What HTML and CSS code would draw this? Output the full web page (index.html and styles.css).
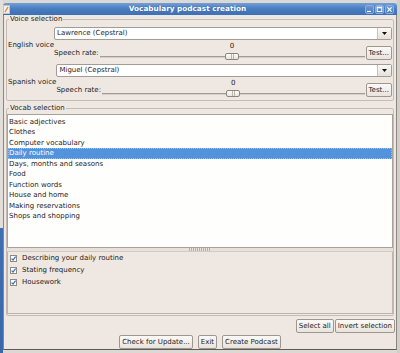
FILE: index.html
```html
<!DOCTYPE html>
<html lang="en">
<head>
    <meta charset="UTF-8">
    <title>Vocabulary podcast creation</title>
    <link rel="stylesheet" href="styles.css">
</head>
<body>
    <div class="screen">
        <div class="edgeLeft"></div>
        <div class="window">
            <div class="titleBar">
                <svg class="appIcon" width="7" height="9" viewBox="0 0 7 9">
                    <rect x="0.5" y="0.5" width="6" height="8" fill="#f4f0ea" stroke="#c9c2b8"/>
                    <path d="M2 7 L5 2" stroke="#e08a2c" stroke-width="1.4"/>
                </svg>
                <div class="title">Vocabulary podcast creation</div>
                <div class="winButtons">
                    <span class="winButton">
                        <svg width="9" height="9" viewBox="0 0 9 9"><path d="M2 6.5 H6" stroke="#fff" stroke-width="1.2"/></svg>
                    </span>
                    <span class="winButton">
                        <svg width="9" height="9" viewBox="0 0 9 9"><rect x="2.2" y="2.2" width="4.6" height="4.4" fill="none" stroke="#fff" stroke-width="1"/><path d="M2.2 2.6 H6.8" stroke="#fff" stroke-width="1.4"/></svg>
                    </span>
                    <span class="winButton">
                        <svg width="9" height="9" viewBox="0 0 9 9"><path d="M2.4 2.4 L6.6 6.6 M6.6 2.4 L2.4 6.6" stroke="#fff" stroke-width="1.3"/></svg>
                    </span>
                </div>
            </div>

            <div class="content">
                <fieldset class="voiceGroup">
                    <legend>Voice selection</legend>

                    <div class="voice">
                        <div class="voiceName">English voice</div>
                        <div class="voiceControls">
                            <div class="combo">
                                <span class="comboText">Lawrence (Cepstral)</span>
                                <span class="comboButton"><svg width="5" height="3" viewBox="0 0 5 3"><polygon points="0,0 5,0 2.5,3" fill="#111"/></svg></span>
                            </div>
                            <div class="rate">
                                <span class="rateLabel">Speech rate:</span>
                                <div class="slider">
                                    <div class="sliderValue">0</div>
                                    <div class="track"><div class="thumb"></div></div>
                                </div>
                                <button class="btn testButton">Test...</button>
                            </div>
                        </div>
                    </div>

                    <div class="voice">
                        <div class="voiceName">Spanish voice</div>
                        <div class="voiceControls">
                            <div class="combo">
                                <span class="comboText">Miguel (Cepstral)</span>
                                <span class="comboButton"><svg width="5" height="3" viewBox="0 0 5 3"><polygon points="0,0 5,0 2.5,3" fill="#111"/></svg></span>
                            </div>
                            <div class="rate">
                                <span class="rateLabel">Speech rate:</span>
                                <div class="slider">
                                    <div class="sliderValue">0</div>
                                    <div class="track"><div class="thumb"></div></div>
                                </div>
                                <button class="btn testButton">Test...</button>
                            </div>
                        </div>
                    </div>
                </fieldset>

                <fieldset class="vocabGroup">
                    <legend>Vocab selection</legend>
                    <ul class="topicList">
                        <li>Basic adjectives</li>
                        <li>Clothes</li>
                        <li>Computer vocabulary</li>
                        <li class="selected">Daily routine</li>
                        <li>Days, months and seasons</li>
                        <li>Food</li>
                        <li>Function words</li>
                        <li>House and home</li>
                        <li>Making reservations</li>
                        <li>Shops and shopping</li>
                    </ul>
                    <div class="splitter"><span class="grip"></span></div>
                    <div class="lessonList">
                        <div class="lesson">
                            <svg class="check" width="7" height="7" viewBox="0 0 7 7"><rect x="0.5" y="0.5" width="6" height="6" fill="#fff" stroke="#8f8983"/><path d="M1.6 3.6 L3 5 L5.6 1.6" fill="none" stroke="#3a6fc0" stroke-width="1.2"/></svg>
                            <span>Describing your daily routine</span>
                        </div>
                        <div class="lesson">
                            <svg class="check" width="7" height="7" viewBox="0 0 7 7"><rect x="0.5" y="0.5" width="6" height="6" fill="#fff" stroke="#8f8983"/><path d="M1.6 3.6 L3 5 L5.6 1.6" fill="none" stroke="#3a6fc0" stroke-width="1.2"/></svg>
                            <span>Stating frequency</span>
                        </div>
                        <div class="lesson">
                            <svg class="check" width="7" height="7" viewBox="0 0 7 7"><rect x="0.5" y="0.5" width="6" height="6" fill="#fff" stroke="#8f8983"/><path d="M1.6 3.6 L3 5 L5.6 1.6" fill="none" stroke="#3a6fc0" stroke-width="1.2"/></svg>
                            <span>Housework</span>
                        </div>
                    </div>
                </fieldset>

                <div class="selectionButtons">
                    <button class="btn">Select all</button>
                    <button class="btn">Invert selection</button>
                </div>

                <div class="mainButtons">
                    <button class="btn">Check for Update...</button>
                    <button class="btn">Exit</button>
                    <button class="btn">Create Podcast</button>
                </div>
            </div>
        </div>
        <div class="edgeRight"></div>
    </div>
</body>
</html>
```

FILE: styles.css
```css
* {
    margin: 0;
    padding: 0;
    box-sizing: border-box;
}
body {
    width: 400px;
    height: 353px;
    overflow: hidden;
    background-color: #dcd8d3;
    font-family: "DejaVu Sans", sans-serif;
    font-size: 7px;
    color: #1e1c1a;
}
.screen {
    display: flex;
    height: 353px;
}
.edgeLeft {
    width: 3px;
    background: linear-gradient(#e2deda 0, #e2deda 228px, #3f6fb2 228px, #3a68a8 100%);
}
.edgeRight {
    width: 3px;
    background-color: #d2cec9;
}
.window {
    width: 394px;
    margin-top: 3px;
    display: flex;
    flex-direction: column;
}
.titleBar {
    height: 12px;
    display: flex;
    align-items: center;
    padding: 0 3px 0 0;
    background: linear-gradient(#729fd6, #4a7ec2 45%, #3c6fb3);
    border-radius: 3px 3px 0 0;
    color: #fff;
}
.appIcon {
    display: block;
    margin-left: 0;
}
.title {
    flex: 1;
    text-align: center;
    font-weight: bold;
    font-size: 7.3px;
    line-height: 12px;
    text-shadow: 0 0 1px #2c5590;
}
.winButtons {
    display: flex;
    gap: 1px;
}
.winButton {
    width: 9px;
    height: 9px;
    display: block;
    border: 1px solid #8cb0de;
    border-radius: 2px;
    background: linear-gradient(#6e9bd4, #4a7cc0);
}
.winButton svg {
    display: block;
    margin: -1px;
}
.content {
    height: 335px;
    display: flex;
    flex-direction: column;
    background-color: #efe7e1;
    border-left: 1px solid #8c8680;
    border-right: 1px solid #8c8680;
    border-bottom: 1px solid #5f5a55;
}
fieldset {
    margin: 0 2px;
    border: 1px solid #c4bcb4;
    border-radius: 2px;
    min-width: 0;
}
legend {
    padding: 0 1px;
    line-height: 8px;
}
.voiceGroup {
    padding: 4px 1px 3px;
}
.voiceGroup legend {
    margin-left: 1px;
}
.voice {
    display: flex;
    align-items: center;
}
.voice + .voice {
    margin-top: 4px;
}
.voiceName {
    white-space: nowrap;
    padding-top: 3px;
}
.voiceControls {
    flex: 1;
    display: flex;
    flex-direction: column;
}
.combo {
    height: 13px;
    display: flex;
    background-color: #fff;
    border: 1px solid #a39c95;
    border-radius: 2px;
}
.comboText {
    flex: 1;
    padding-left: 2px;
    line-height: 11px;
}
.comboButton {
    width: 14px;
    display: flex;
    align-items: center;
    justify-content: center;
    border-left: 1px solid #c9c2bb;
    background: linear-gradient(#fbf9f7, #e6e0da);
}
.rate {
    height: 18px;
    margin-top: 2px;
    display: flex;
    align-items: flex-start;
}
.rateLabel {
    margin-top: 7px;
    line-height: 8px;
    white-space: nowrap;
}
.slider {
    flex: 1;
    margin-left: 1px;
    display: flex;
    flex-direction: column;
}
.sliderValue {
    line-height: 8px;
    text-align: center;
}
.track {
    height: 10px;
    padding-top: 3px;
    display: flex;
    justify-content: center;
    background: linear-gradient(transparent 0, transparent 6px, #a39b93 6px, #a39b93 7px, #d6cfc8 7px, #d6cfc8 8px, transparent 8px);
}
.thumb {
    width: 14px;
    height: 7px;
    border: 1px solid #8d8680;
    border-radius: 2px;
    background:
        linear-gradient(90deg, transparent 5px, #bdb6af 5px, #bdb6af 6px, transparent 6px, transparent 7px, #bdb6af 7px, #bdb6af 8px, transparent 8px),
        linear-gradient(#fdfcfb, #e9e4df);
}
.btn {
    height: 14px;
    padding: 0 2px;
    font-family: "DejaVu Sans", sans-serif;
    font-size: 7px;
    line-height: 12px;
    color: #1e1c1a;
    white-space: nowrap;
    border: 1px solid #9e978f;
    border-radius: 2px;
    background: linear-gradient(#fbf9f7, #e9e3dd);
}
.testButton {
    margin-top: 4px;
    margin-left: 1px;
}
.vocabGroup {
    margin-top: 3px;
    padding: 2px 0 1px;
}
.vocabGroup legend {
    margin-left: 2px;
}
.topicList {
    list-style: none;
    height: 134px;
    padding-top: 2px;
    background-color: #fefefd;
    border: 1px solid #a8a199;
}
.topicList li {
    line-height: 10.45px;
    padding-left: 1px;
    white-space: nowrap;
}
.topicList .selected {
    background-color: #5393dc;
    color: #fff;
    outline: 1px dotted #9cc0ea;
    outline-offset: -1px;
}
.splitter {
    height: 4px;
    display: flex;
    justify-content: center;
    border-bottom: 1px solid #d3cbc3;
    background-color: #e8e0d9;
}
.grip {
    width: 22px;
    height: 3px;
    background: repeating-linear-gradient(90deg, #b8b0a8 0, #b8b0a8 1px, transparent 1px, transparent 2px);
}
.lessonList {
    height: 62px;
    border: 1px solid #bdb5ad;
    border-top: none;
}
.lesson {
    height: 12.2px;
    display: flex;
    align-items: center;
    gap: 5px;
    padding-left: 2px;
}
.check {
    display: block;
}
.selectionButtons {
    margin-top: 3px;
    margin-right: 1px;
    display: flex;
    justify-content: flex-end;
    gap: 1px;
}
.mainButtons {
    margin-top: 2px;
    display: flex;
    justify-content: center;
    gap: 5px;
}
```
